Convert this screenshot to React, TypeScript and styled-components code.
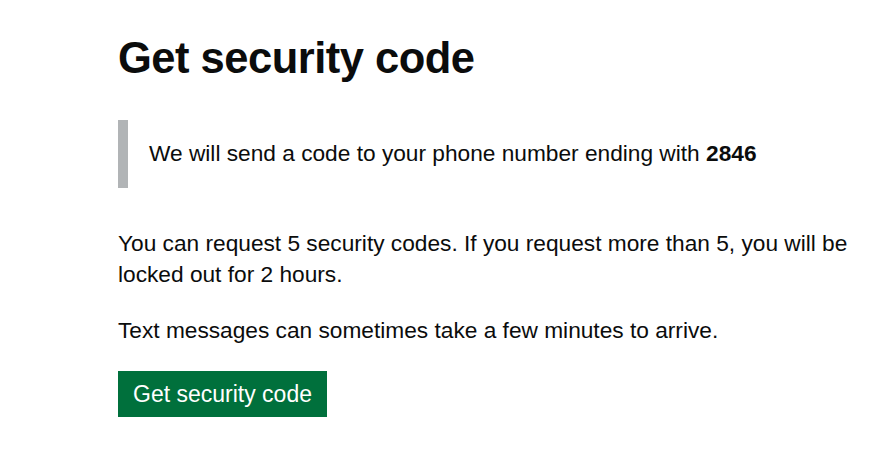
import React from "react";
import styled, { createGlobalStyle } from "styled-components";

const Global = createGlobalStyle`
  html, body { margin: 0; padding: 0; background: #ffffff; }
  body { font-family: "Liberation Sans", Arial, sans-serif; color: #0b0c0c; }
`;

const Main = styled.main`
  padding: 28px 0 0 118px;
  width: 740px;
`;

const Heading = styled.h1`
  margin: 0 0 32px;
  font-size: 43.5px;
  line-height: 60px;
  font-weight: 700;
  letter-spacing: -0.5px;
`;

const Inset = styled.div`
  border-left: 10px solid #b1b4b6;
  padding: 18px 0 19px 21px;
  font-size: 22.7px;
  line-height: 31px;
  margin-bottom: 40px;
`;

const Para = styled.p`
  margin: 0 0 25px;
  font-size: 22.7px;
  line-height: 31px;
`;

const Button = styled.button`
  font-family: inherit;
  font-size: 23px;
  line-height: 26px;
  color: #ffffff;
  background: #00703c;
  border: 0;
  border-radius: 0;
  box-shadow: 0 3px 0 #002d18;
  padding: 10px 15px;
  cursor: pointer;
  margin: 0;
`;

export default function App() {
  return (
    <>
      <Global />
      <Main>
        <Heading>Get security code</Heading>
        <Inset>
          We will send a code to your phone number ending with <strong>2846</strong>
        </Inset>
        <Para>
          You can request 5 security codes. If you request more than 5, you will be locked out for 2 hours.
        </Para>
        <Para>Text messages can sometimes take a few minutes to arrive.</Para>
        <Button>Get security code</Button>
      </Main>
    </>
  );
}
